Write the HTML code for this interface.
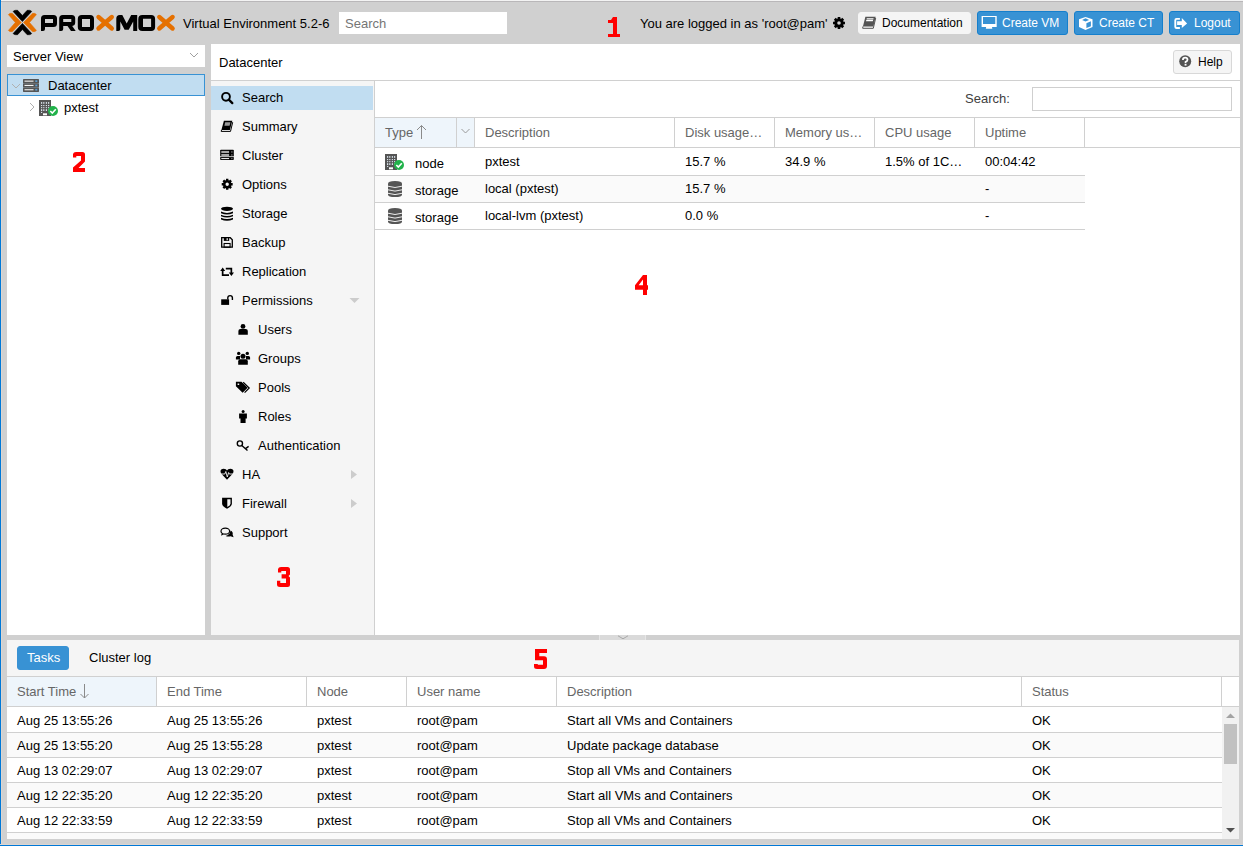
<!DOCTYPE html>
<html><head><meta charset="utf-8">
<style>
*{box-sizing:border-box;margin:0;padding:0}
html,body{width:1243px;height:846px;overflow:hidden}
body{position:relative;background:#d0d0d0;font-family:"Liberation Sans",sans-serif;font-size:13px;color:#000}
.a{position:absolute;display:block}
.t{position:absolute;white-space:nowrap;line-height:15px}
.btnb{position:absolute;background:#3892d4;border:1px solid #157fcc;border-radius:3px}
.btng{position:absolute;background:#f5f5f5;border:1px solid #f5f5f5;border-radius:3px}
.red{position:absolute;color:#f00;font-weight:bold;font-size:27px;line-height:20px}
</style></head><body>

<div class="a" style="left:0px;top:0px;width:1243px;height:1px;background:#f3f3f3;"></div>
<div class="a" style="left:0px;top:1px;width:1243px;height:1px;background:#b9b7b9;"></div>
<div class="a" style="left:0px;top:0px;width:1px;height:846px;background:#0078d7;"></div>
<div class="a" style="left:1px;top:2px;width:1px;height:843px;background:#dcd6d2;"></div>
<div class="a" style="left:0px;top:844px;width:1243px;height:1px;background:#dcd6d2;"></div>
<div class="a" style="left:0px;top:845px;width:1243px;height:1px;background:#0078d7;"></div>
<svg class="a" style="left:0px;top:0px;" width="180" height="40" viewBox="0 0 180 40">
<path fill="#e57000" stroke="#e57000" stroke-width="0.6" stroke-linejoin="round" d="M8.4,14.6 Q9.8,12.9 12.4,13.4 L21.3,22.5 L12.4,31.6 Q9.8,32.1 8.4,30.4 L15.3,22.5 Z"/>
<path fill="#e57000" stroke="#e57000" stroke-width="0.6" stroke-linejoin="round" d="M36.4,14.6 Q35,12.9 32.4,13.4 L23.5,22.5 L32.4,31.6 Q35,32.1 36.4,30.4 L29.5,22.5 Z"/>
<path fill="#000" stroke="#000" stroke-width="0.6" stroke-linejoin="round" d="M13.1,11.4 Q14.6,9.8 17.6,10.3 L22.4,15.5 L27.2,10.3 Q30.2,9.8 31.7,11.4 L22.4,21.6 Z"/>
<path fill="#000" stroke="#000" stroke-width="0.6" stroke-linejoin="round" d="M13.1,33.6 Q14.6,35.2 17.6,34.7 L22.4,29.5 L27.2,34.7 Q30.2,35.2 31.7,33.6 L22.4,23.4 Z"/>
<path fill="#000" fill-rule="evenodd" d="M41,31 L41,18.5 Q41,15 44.5,15 L53.5,15 Q57,15 57,18.5 L57,23.5 Q57,27 53.5,27 L45,27 L45,29 Q45,31 43,31 Z M45,19 L53,19 L53,23 L45,23 Z"/>
<path fill="#000" fill-rule="evenodd" d="M59.2,31 L59.2,18.5 Q59.2,15 62.7,15 L71.7,15 Q75.2,15 75.2,18.5 L75.2,22.5 Q75.2,25.5 72.2,26 L75.7,31 L71,31 L67.5,26 L63.2,26 L63.2,29 Q63.2,31 61.2,31 Z M63.2,19 L71.3,19 L71.3,22 L63.2,22 Z"/>
<path fill="#000" fill-rule="evenodd" d="M81.8,15 L90,15 Q94,15 94,19 L94,27 Q94,31 90,31 L81.8,31 Q77.8,31 77.8,27 L77.8,19 Q77.8,15 81.8,15 Z M82,19 L90,19 L90,27 L82,27 Z"/>
<path fill="none" stroke="#e57000" stroke-width="4.4" stroke-linecap="round" d="M98.5,17 L111.8,28.5 M111.8,17 L98.5,28.5"/>
<path fill="#000" d="M116.3,31 L116.3,18.5 Q116.3,15 119.8,15 L122.3,15 L126.7,23.5 L131.2,15 L137.2,15 L137.2,31 L133.2,31 L133.2,21.5 L128.7,29.7 L124.6,29.7 L120.3,21.5 L120.3,29 Q120.3,31 118.3,31 Z"/>
<path fill="#000" fill-rule="evenodd" d="M142.3,15 L151.1,15 Q155.1,15 155.1,19 L155.1,27 Q155.1,31 151.1,31 L142.3,31 Q138.3,31 138.3,27 L138.3,19 Q138.3,15 142.3,15 Z M143,18.8 L151.1,18.8 L151.1,27 L143,27 Z"/>
<path fill="none" stroke="#e57000" stroke-width="4.4" stroke-linecap="round" d="M159.3,17 L172.6,28.5 M172.6,17 L159.3,28.5"/>
</svg>
<div class="t" style="left:183px;top:16px;font-size:13px;">Virtual Environment 5.2-6</div>
<div class="a" style="left:339px;top:12px;width:168px;height:22px;background:#fff;"></div>
<div class="t" style="left:345px;top:16px;font-size:13px;color:#757575;">Search</div>
<div class="t" style="left:640px;top:16px;font-size:13px;">You are logged in as 'root@pam'</div>
<svg class="a" style="left:830px;top:14px;" width="18" height="18" viewBox="0 0 18 18"><path fill="#000" fill-rule="evenodd" d="M13.34,7.20 L13.51,7.68 L14.96,7.69 L14.96,10.31 L13.51,10.32 L13.34,10.80 L13.13,11.25 L14.14,12.29 L12.29,14.14 L11.25,13.13 L10.80,13.34 L10.32,13.51 L10.31,14.96 L7.69,14.96 L7.68,13.51 L7.20,13.34 L6.75,13.13 L5.71,14.14 L3.86,12.29 L4.87,11.25 L4.66,10.80 L4.49,10.32 L3.04,10.31 L3.04,7.69 L4.49,7.68 L4.66,7.20 L4.87,6.75 L3.86,5.71 L5.71,3.86 L6.75,4.87 L7.20,4.66 L7.68,4.49 L7.69,3.04 L10.31,3.04 L10.32,4.49 L10.80,4.66 L11.25,4.87 L12.29,3.86 L14.14,5.71 L13.13,6.75 Z M10.80,9.00 A1.8,1.8 0 1,0 7.20,9.00 A1.8,1.8 0 1,0 10.80,9.00 Z"/></svg>
<div class="btng" style="left:858px;top:12px;width:113px;height:22px"></div>
<svg class="a" style="left:861px;top:13px;" width="20" height="20" viewBox="0 0 20 20"><path fill="#555" d="M4.4,3.8 L14.7,3.8 L12.4,13.5 L1.9,13.5 Z"/><path fill="#fff" d="M5.8,5.3 L12.6,5.3 L12.3,6.4 L5.5,6.4 Z M5.3,7.1 L12.1,7.1 L11.8,8.2 L5,8.2 Z"/><path fill="none" stroke="#555" stroke-width="1" d="M1.9,13.5 L1.7,15.3 L12.3,15.3 L14.7,5"/></svg>
<div class="t" style="left:882px;top:16px;font-size:12px;">Documentation</div>
<div class="btnb" style="left:977px;top:11px;width:91px;height:24px"></div>
<svg class="a" style="left:979px;top:13px;" width="20" height="20" viewBox="0 0 20 20"><path fill="#fff" fill-rule="evenodd" d="M2.6,3 L17.7,3 L17.7,14 L2.6,14 Z M4,4.1 L16.3,4.1 L16.3,10.9 L4,10.9 Z"/><path fill="#fff" d="M7.1,14 L13,14 L13.3,15.8 L6.8,15.8 Z"/></svg>
<div class="t" style="left:1002px;top:16px;font-size:12px;color:#fff;">Create VM</div>
<div class="btnb" style="left:1074px;top:11px;width:89px;height:24px"></div>
<svg class="a" style="left:1076px;top:13px;" width="20" height="20" viewBox="0 0 20 20"><path fill="#fff" fill-rule="evenodd" d="M9.5,4.1 L16.5,6.3 L16.5,14 L9.5,16.9 L3,14 L3,6.3 Z M6.1,7 L9.5,5.3 L13.1,7 L9.5,8.5 Z M10.4,10.3 L14.9,8.3 L14.9,13.3 L10.4,15.1 Z"/></svg>
<div class="t" style="left:1099px;top:16px;font-size:12px;color:#fff;">Create CT</div>
<div class="btnb" style="left:1169px;top:11px;width:71px;height:24px"></div>
<svg class="a" style="left:1171px;top:13px;" width="20" height="20" viewBox="0 0 20 20"><path fill="none" stroke="#fff" stroke-width="1.9" d="M8.9,5.9 L5.6,5.9 Q4.3,5.9 4.3,7.2 L4.3,13.7 Q4.3,15 5.6,15 L8.9,15"/><path fill="#fff" d="M6.1,8.2 L10.8,8.2 L10.8,5 L16.1,10.5 L10.8,15 L10.8,12.1 L6.1,12.1 Z"/></svg>
<div class="t" style="left:1194px;top:16px;font-size:12px;color:#fff;">Logout</div>
<div class="a" style="left:7px;top:45px;width:198px;height:22px;background:#fff;"></div>
<div class="t" style="left:13px;top:49px;font-size:13px;">Server View</div>
<svg class="a" style="left:189px;top:52px;" width="10" height="7" viewBox="0 0 10 7"><path fill="none" stroke="#a0a0a0" stroke-width="1" d="M1,1 L5,5 L9,1"/></svg>
<div class="a" style="left:7px;top:74px;width:198px;height:561px;background:#fff;"></div>
<div class="a" style="left:7px;top:74px;width:198px;height:22px;background:#c1ddf1;border:1px solid #3892d4"></div>
<svg class="a" style="left:11px;top:83px;" width="11" height="7" viewBox="0 0 11 7"><path fill="none" stroke="#b0b0b0" stroke-width="1" d="M1,1 L5,5 L9,1"/></svg>
<svg class="a" style="left:23px;top:0px;" width="17" height="100" viewBox="0 0 17 100"><rect x="0" y="79" width="16" height="4.3" rx="0.6" fill="#555"/><rect x="1.5" y="80.6" width="9" height="1.1" fill="#f4f4f4"/><rect x="12.3" y="80.3" width="2" height="1.7" fill="#5a9fd6"/><rect x="0" y="83.3" width="16" height="4.3" rx="0.6" fill="#555"/><rect x="1.5" y="84.89999999999999" width="9" height="1.1" fill="#f4f4f4"/><rect x="12.3" y="84.6" width="2" height="1.7" fill="#5a9fd6"/><rect x="0" y="87.6" width="16" height="4.3" rx="0.6" fill="#555"/><rect x="1.5" y="89.19999999999999" width="9" height="1.1" fill="#f4f4f4"/><rect x="12.3" y="88.89999999999999" width="2" height="1.7" fill="#5a9fd6"/></svg>
<div class="t" style="left:48px;top:78px;font-size:13px;">Datacenter</div>
<svg class="a" style="left:29px;top:102px;" width="7" height="11" viewBox="0 0 7 11"><path fill="none" stroke="#b0b0b0" stroke-width="1" d="M1,1 L5,5 L1,9"/></svg>
<svg class="a" style="left:39px;top:100px;" width="20" height="17" viewBox="0 0 20 17"><rect x="0" y="0" width="12" height="16" fill="#555"/><rect x="2" y="2.1" width="1.2" height="1.7" fill="#d8e2ea"/><rect x="4.2" y="2.1" width="1.2" height="1.7" fill="#d8e2ea"/><rect x="6.8" y="2.1" width="1.2" height="1.7" fill="#d8e2ea"/><rect x="9" y="2.1" width="1.2" height="1.7" fill="#d8e2ea"/><rect x="2" y="5" width="1.2" height="1.1" fill="#d8e2ea"/><rect x="4.2" y="5" width="1.2" height="1.1" fill="#d8e2ea"/><rect x="6.8" y="5" width="1.2" height="1.1" fill="#d8e2ea"/><rect x="9" y="5" width="1.2" height="1.1" fill="#d8e2ea"/><rect x="2" y="7.1" width="1.2" height="1.1" fill="#d8e2ea"/><rect x="4.2" y="7.1" width="1.2" height="1.1" fill="#d8e2ea"/><rect x="6.8" y="7.1" width="1.2" height="1.1" fill="#d8e2ea"/><rect x="9" y="7.1" width="1.2" height="1.1" fill="#d8e2ea"/><rect x="2" y="9.2" width="1.2" height="1.8" fill="#d8e2ea"/><rect x="4.2" y="9.2" width="1.2" height="1.8" fill="#d8e2ea"/><rect x="6.8" y="9.2" width="1.2" height="1.8" fill="#d8e2ea"/><rect x="9" y="9.2" width="1.2" height="1.8" fill="#d8e2ea"/><rect x="2" y="11.9" width="1.2" height="1.1" fill="#d8e2ea"/><rect x="4" y="13.3" width="4" height="2" fill="#fff"/><circle cx="14" cy="11" r="5" fill="#21b24a"/><path fill="none" stroke="#fff" stroke-width="1.6" d="M11.3,11 L13.3,13 L16.8,9.3"/></svg>
<div class="t" style="left:64px;top:100px;font-size:13px;">pxtest</div>
<div class="a" style="left:211px;top:44px;width:1029px;height:591px;background:#fff;"></div>
<div class="t" style="left:219px;top:55px;font-size:13px;">Datacenter</div>
<div class="btng" style="left:1173px;top:50px;width:59px;height:24px;border-color:#d8d8d8"></div>
<svg class="a" style="left:1179px;top:55px;" width="13" height="13" viewBox="0 0 13 13"><circle cx="6.2" cy="6.2" r="6" fill="#555"/><path fill="none" stroke="#fff" stroke-width="1.8" d="M3.9,4.9 Q3.9,2.7 6.2,2.7 Q8.5,2.7 8.5,4.8 Q8.5,6.2 6.6,6.8 L6.6,8"/><rect x="5.6" y="8.8" width="1.9" height="1.8" fill="#fff"/></svg>
<div class="t" style="left:1198px;top:55px;font-size:12px;">Help</div>
<div class="a" style="left:211px;top:80px;width:1029px;height:1px;background:#d0d0d0;"></div>
<div class="a" style="left:211px;top:81px;width:163px;height:554px;background:#f5f5f5;"></div>
<div class="a" style="left:374px;top:81px;width:1px;height:554px;background:#d0d0d0;"></div>
<div class="a" style="left:211px;top:86px;width:162px;height:24px;background:#c1ddf1;"></div>
<div class="t" style="left:242px;top:90px;font-size:13px;">Search</div>
<div class="t" style="left:242px;top:119px;font-size:13px;">Summary</div>
<div class="t" style="left:242px;top:148px;font-size:13px;">Cluster</div>
<div class="t" style="left:242px;top:177px;font-size:13px;">Options</div>
<div class="t" style="left:242px;top:206px;font-size:13px;">Storage</div>
<div class="t" style="left:242px;top:235px;font-size:13px;">Backup</div>
<div class="t" style="left:242px;top:264px;font-size:13px;">Replication</div>
<div class="t" style="left:242px;top:293px;font-size:13px;">Permissions</div>
<div class="t" style="left:258px;top:322px;font-size:13px;">Users</div>
<div class="t" style="left:258px;top:351px;font-size:13px;">Groups</div>
<div class="t" style="left:258px;top:380px;font-size:13px;">Pools</div>
<div class="t" style="left:258px;top:409px;font-size:13px;">Roles</div>
<div class="t" style="left:258px;top:438px;font-size:13px;">Authentication</div>
<div class="t" style="left:242px;top:467px;font-size:13px;">HA</div>
<div class="t" style="left:242px;top:496px;font-size:13px;">Firewall</div>
<div class="t" style="left:242px;top:525px;font-size:13px;">Support</div>
<div id="navicons"></div>
<svg class="a" style="left:349px;top:297px;" width="11" height="7" viewBox="0 0 11 7"><path fill="#cccccc" d="M0.5,1 L10.5,1 L5.5,6 Z"/></svg>
<svg class="a" style="left:350px;top:469px;" width="8" height="11" viewBox="0 0 8 11"><path fill="#cccccc" d="M1,1 L7,5.5 L1,10 Z"/></svg>
<svg class="a" style="left:350px;top:498px;" width="8" height="11" viewBox="0 0 8 11"><path fill="#cccccc" d="M1,1 L7,5.5 L1,10 Z"/></svg>
<div class="t" style="left:965px;top:91px;font-size:13px;color:#404040;">Search:</div>
<div class="a" style="left:1032px;top:87px;width:200px;height:24px;background:#fff;border:1px solid #cfcfcf"></div>
<div class="a" style="left:375px;top:117px;width:865px;height:1px;background:#d0d0d0;"></div>
<div class="a" style="left:375px;top:118px;width:100px;height:29px;background:#eef5fb;"></div>
<div class="a" style="left:375px;top:147px;width:865px;height:1px;background:#d0d0d0;"></div>
<div class="a" style="left:474px;top:118px;width:1px;height:29px;background:#d0d0d0;"></div>
<div class="a" style="left:674px;top:118px;width:1px;height:29px;background:#d0d0d0;"></div>
<div class="a" style="left:774px;top:118px;width:1px;height:29px;background:#d0d0d0;"></div>
<div class="a" style="left:874px;top:118px;width:1px;height:29px;background:#d0d0d0;"></div>
<div class="a" style="left:974px;top:118px;width:1px;height:29px;background:#d0d0d0;"></div>
<div class="a" style="left:1084px;top:118px;width:1px;height:29px;background:#d0d0d0;"></div>
<div class="a" style="left:456px;top:118px;width:1px;height:29px;background:#d0d0d0;"></div>
<svg class="a" style="left:460px;top:128px;" width="11" height="7" viewBox="0 0 11 7"><path fill="none" stroke="#9a9a9a" stroke-width="1" d="M1.5,1 L5.5,5 L9.5,1"/></svg>
<div class="t" style="left:385px;top:125px;font-size:13px;color:#666;">Type</div>
<div class="t" style="left:485px;top:125px;font-size:13px;color:#666;">Description</div>
<div class="t" style="left:685px;top:125px;font-size:13px;color:#666;">Disk usage…</div>
<div class="t" style="left:785px;top:125px;font-size:13px;color:#666;">Memory us…</div>
<div class="t" style="left:885px;top:125px;font-size:13px;color:#666;">CPU usage</div>
<div class="t" style="left:985px;top:125px;font-size:13px;color:#666;">Uptime</div>
<svg class="a" style="left:415px;top:124px;" width="12" height="16" viewBox="0 0 12 16"><path fill="none" stroke="#8a8a8a" stroke-width="1" d="M6.5,1.5 L6.5,15 M2,6 L6.5,1.5 L11,6"/></svg>
<div class="a" style="left:375px;top:175px;width:710px;height:1px;background:#d0d0d0;"></div>
<div class="t" style="left:415px;top:156px;font-size:13px;">node</div>
<div class="t" style="left:485px;top:154px;font-size:13px;">pxtest</div>
<div class="t" style="left:685px;top:154px;font-size:13px;">15.7 %</div>
<div class="t" style="left:785px;top:154px;font-size:13px;">34.9 %</div>
<div class="t" style="left:885px;top:154px;font-size:13px;">1.5% of 1C…</div>
<div class="t" style="left:985px;top:154px;font-size:13px;">00:04:42</div>
<div class="a" style="left:375px;top:176px;width:710px;height:26px;background:#fafafa;"></div>
<div class="a" style="left:375px;top:202px;width:710px;height:1px;background:#d0d0d0;"></div>
<div class="t" style="left:415px;top:183px;font-size:13px;">storage</div>
<div class="t" style="left:485px;top:181px;font-size:13px;">local (pxtest)</div>
<div class="t" style="left:685px;top:181px;font-size:13px;">15.7 %</div>
<div class="t" style="left:785px;top:181px;font-size:13px;"></div>
<div class="t" style="left:885px;top:181px;font-size:13px;"></div>
<div class="t" style="left:985px;top:181px;font-size:13px;">-</div>
<div class="a" style="left:375px;top:229px;width:710px;height:1px;background:#d0d0d0;"></div>
<div class="t" style="left:415px;top:210px;font-size:13px;">storage</div>
<div class="t" style="left:485px;top:208px;font-size:13px;">local-lvm (pxtest)</div>
<div class="t" style="left:685px;top:208px;font-size:13px;">0.0 %</div>
<div class="t" style="left:785px;top:208px;font-size:13px;"></div>
<div class="t" style="left:885px;top:208px;font-size:13px;"></div>
<div class="t" style="left:985px;top:208px;font-size:13px;">-</div>
<svg class="a" style="left:385px;top:154px;" width="20" height="17" viewBox="0 0 20 17"><rect x="0" y="0" width="12" height="16" fill="#555"/><rect x="2" y="2.1" width="1.2" height="1.7" fill="#d8e2ea"/><rect x="4.2" y="2.1" width="1.2" height="1.7" fill="#d8e2ea"/><rect x="6.8" y="2.1" width="1.2" height="1.7" fill="#d8e2ea"/><rect x="9" y="2.1" width="1.2" height="1.7" fill="#d8e2ea"/><rect x="2" y="5" width="1.2" height="1.1" fill="#d8e2ea"/><rect x="4.2" y="5" width="1.2" height="1.1" fill="#d8e2ea"/><rect x="6.8" y="5" width="1.2" height="1.1" fill="#d8e2ea"/><rect x="9" y="5" width="1.2" height="1.1" fill="#d8e2ea"/><rect x="2" y="7.1" width="1.2" height="1.1" fill="#d8e2ea"/><rect x="4.2" y="7.1" width="1.2" height="1.1" fill="#d8e2ea"/><rect x="6.8" y="7.1" width="1.2" height="1.1" fill="#d8e2ea"/><rect x="9" y="7.1" width="1.2" height="1.1" fill="#d8e2ea"/><rect x="2" y="9.2" width="1.2" height="1.8" fill="#d8e2ea"/><rect x="4.2" y="9.2" width="1.2" height="1.8" fill="#d8e2ea"/><rect x="6.8" y="9.2" width="1.2" height="1.8" fill="#d8e2ea"/><rect x="9" y="9.2" width="1.2" height="1.8" fill="#d8e2ea"/><rect x="2" y="11.9" width="1.2" height="1.1" fill="#d8e2ea"/><rect x="4" y="13.3" width="4" height="2" fill="#fff"/><circle cx="14" cy="11" r="5" fill="#21b24a"/><path fill="none" stroke="#fff" stroke-width="1.6" d="M11.3,11 L13.3,13 L16.8,9.3"/></svg>
<svg class="a" style="left:388px;top:181px;" width="14" height="17" viewBox="0 0 14 17"><path fill="#555" d="M0,2.6 Q0,0 7,0 Q14,0 14,2.6 L14,13.4 Q14,16 7,16 Q0,16 0,13.4 Z"/><path fill="none" stroke="#fafafa" stroke-width="0.9" d="M0,5.2 Q7,7.800000000000001 14,5.2"/><path fill="none" stroke="#fafafa" stroke-width="0.9" d="M0,8.8 Q7,11.4 14,8.8"/><path fill="none" stroke="#fafafa" stroke-width="0.9" d="M0,12.3 Q7,14.9 14,12.3"/></svg>
<svg class="a" style="left:388px;top:208px;" width="14" height="17" viewBox="0 0 14 17"><path fill="#555" d="M0,2.6 Q0,0 7,0 Q14,0 14,2.6 L14,13.4 Q14,16 7,16 Q0,16 0,13.4 Z"/><path fill="none" stroke="#fff" stroke-width="0.9" d="M0,5.2 Q7,7.800000000000001 14,5.2"/><path fill="none" stroke="#fff" stroke-width="0.9" d="M0,8.8 Q7,11.4 14,8.8"/><path fill="none" stroke="#fff" stroke-width="0.9" d="M0,12.3 Q7,14.9 14,12.3"/></svg>
<div class="a" style="left:599px;top:635px;width:47px;height:5px;background:#e6e6e6;"></div>
<div class="a" style="left:600px;top:635px;width:45px;height:5px;background:#dadada;"></div>
<svg class="a" style="left:615px;top:635px;" width="16" height="5" viewBox="0 0 16 5"><path fill="none" stroke="#a8a8a8" stroke-width="1" d="M3,0.8 L8,3.8 L13,0.8"/></svg>
<div class="a" style="left:7px;top:640px;width:1232px;height:199px;background:#fff;"></div>
<div class="a" style="left:7px;top:640px;width:1232px;height:36px;background:#f5f5f5;"></div>
<div class="btnb" style="left:17px;top:646px;width:52px;height:24px;border-color:#3892d4"></div>
<div class="t" style="left:27px;top:650px;font-size:13px;color:#fff;">Tasks</div>
<div class="t" style="left:89px;top:650px;font-size:13px;">Cluster log</div>
<div class="a" style="left:7px;top:676px;width:1232px;height:1px;background:#d0d0d0;"></div>
<div class="a" style="left:7px;top:677px;width:150px;height:29px;background:#eef5fb;"></div>
<div class="a" style="left:7px;top:706px;width:1232px;height:1px;background:#d0d0d0;"></div>
<div class="a" style="left:156px;top:677px;width:1px;height:29px;background:#d0d0d0;"></div>
<div class="t" style="left:17px;top:684px;font-size:13px;color:#666;">Start Time</div>
<div class="a" style="left:306px;top:677px;width:1px;height:29px;background:#d0d0d0;"></div>
<div class="t" style="left:167px;top:684px;font-size:13px;color:#666;">End Time</div>
<div class="a" style="left:406px;top:677px;width:1px;height:29px;background:#d0d0d0;"></div>
<div class="t" style="left:317px;top:684px;font-size:13px;color:#666;">Node</div>
<div class="a" style="left:556px;top:677px;width:1px;height:29px;background:#d0d0d0;"></div>
<div class="t" style="left:417px;top:684px;font-size:13px;color:#666;">User name</div>
<div class="a" style="left:1021px;top:677px;width:1px;height:29px;background:#d0d0d0;"></div>
<div class="t" style="left:567px;top:684px;font-size:13px;color:#666;">Description</div>
<div class="a" style="left:1221px;top:677px;width:1px;height:29px;background:#d0d0d0;"></div>
<div class="t" style="left:1032px;top:684px;font-size:13px;color:#666;">Status</div>
<svg class="a" style="left:78px;top:683px;" width="12" height="16" viewBox="0 0 12 16"><path fill="none" stroke="#8a8a8a" stroke-width="1" d="M6.5,1 L6.5,15 M2.5,11 L6.5,15 L10.5,11"/></svg>
<div class="a" style="left:7px;top:732px;width:1215px;height:1px;background:#d0d0d0;"></div>
<div class="t" style="left:17px;top:713px;font-size:13px;">Aug 25 13:55:26</div>
<div class="t" style="left:167px;top:713px;font-size:13px;">Aug 25 13:55:26</div>
<div class="t" style="left:317px;top:713px;font-size:13px;">pxtest</div>
<div class="t" style="left:417px;top:713px;font-size:13px;">root@pam</div>
<div class="t" style="left:567px;top:713px;font-size:13px;">Start all VMs and Containers</div>
<div class="t" style="left:1032px;top:713px;font-size:13px;">OK</div>
<div class="a" style="left:7px;top:733px;width:1215px;height:24px;background:#fafafa;"></div>
<div class="a" style="left:7px;top:757px;width:1215px;height:1px;background:#d0d0d0;"></div>
<div class="t" style="left:17px;top:738px;font-size:13px;">Aug 25 13:55:20</div>
<div class="t" style="left:167px;top:738px;font-size:13px;">Aug 25 13:55:28</div>
<div class="t" style="left:317px;top:738px;font-size:13px;">pxtest</div>
<div class="t" style="left:417px;top:738px;font-size:13px;">root@pam</div>
<div class="t" style="left:567px;top:738px;font-size:13px;">Update package database</div>
<div class="t" style="left:1032px;top:738px;font-size:13px;">OK</div>
<div class="a" style="left:7px;top:782px;width:1215px;height:1px;background:#d0d0d0;"></div>
<div class="t" style="left:17px;top:763px;font-size:13px;">Aug 13 02:29:07</div>
<div class="t" style="left:167px;top:763px;font-size:13px;">Aug 13 02:29:07</div>
<div class="t" style="left:317px;top:763px;font-size:13px;">pxtest</div>
<div class="t" style="left:417px;top:763px;font-size:13px;">root@pam</div>
<div class="t" style="left:567px;top:763px;font-size:13px;">Stop all VMs and Containers</div>
<div class="t" style="left:1032px;top:763px;font-size:13px;">OK</div>
<div class="a" style="left:7px;top:783px;width:1215px;height:24px;background:#fafafa;"></div>
<div class="a" style="left:7px;top:807px;width:1215px;height:1px;background:#d0d0d0;"></div>
<div class="t" style="left:17px;top:788px;font-size:13px;">Aug 12 22:35:20</div>
<div class="t" style="left:167px;top:788px;font-size:13px;">Aug 12 22:35:20</div>
<div class="t" style="left:317px;top:788px;font-size:13px;">pxtest</div>
<div class="t" style="left:417px;top:788px;font-size:13px;">root@pam</div>
<div class="t" style="left:567px;top:788px;font-size:13px;">Start all VMs and Containers</div>
<div class="t" style="left:1032px;top:788px;font-size:13px;">OK</div>
<div class="a" style="left:7px;top:832px;width:1215px;height:1px;background:#d0d0d0;"></div>
<div class="t" style="left:17px;top:813px;font-size:13px;">Aug 12 22:33:59</div>
<div class="t" style="left:167px;top:813px;font-size:13px;">Aug 12 22:33:59</div>
<div class="t" style="left:317px;top:813px;font-size:13px;">pxtest</div>
<div class="t" style="left:417px;top:813px;font-size:13px;">root@pam</div>
<div class="t" style="left:567px;top:813px;font-size:13px;">Stop all VMs and Containers</div>
<div class="t" style="left:1032px;top:813px;font-size:13px;">OK</div>
<div class="a" style="left:7px;top:833px;width:1215px;height:6px;background:#fafafa;"></div>
<div class="a" style="left:1222px;top:707px;width:17px;height:132px;background:#f1f1f1;"></div>
<div class="a" style="left:1224px;top:724px;width:13px;height:40px;background:#c1c1c1;"></div>
<svg class="a" style="left:1225px;top:712px;" width="11" height="7" viewBox="0 0 11 7"><path fill="#a3a3a3" d="M1,6 L5.5,1.5 L10,6 Z"/></svg>
<svg class="a" style="left:1225px;top:827px;" width="11" height="7" viewBox="0 0 11 7"><path fill="#505050" d="M1,1 L10,1 L5.5,5.5 Z"/></svg>
<svg class="a" style="left:0;top:0" width="1243" height="846" viewBox="0 0 1243 846"><circle cx="226" cy="96.8" r="3.9" fill="none" stroke="#000" stroke-width="1.9"/><path d="M228.8,99.6 L232.3,103.1" stroke="#000" stroke-width="2.3" stroke-linecap="round"/><path d="M223.9,120.8 L232.3,120.8 L229.9,130 L221.4,130 Z" fill="#000"/><path d="M225.2,122.2 L230.4,122.2 L229.6,125.8 L224.4,125.8 Z" fill="#9a9a9a"/><path d="M221.5,130 L221.2,131.4 L230.5,131.4 L232.7,122.2" fill="none" stroke="#000" stroke-width="1"/><rect x="220.2" y="149.8" width="13.6" height="10.3" rx="0.8" fill="#000"/><rect x="220" y="156.3" width="14" height="0.8" fill="#f5f5f5"/><rect x="221.3" y="150.9" width="7.8" height="2.1" fill="#a8a8a8"/><rect x="221.3" y="153.9" width="7.8" height="2.1" fill="#a8a8a8"/><rect x="221.3" y="158.1" width="7.8" height="1.0" fill="#fff"/><rect x="231.2" y="151.2" width="1.3" height="1.5" fill="#777"/><rect x="231.2" y="154.2" width="1.3" height="1.5" fill="#777"/><rect x="231.2" y="158" width="1.3" height="1.2" fill="#777"/><path fill="#000" fill-rule="evenodd" d="M231.17,182.65 L231.33,183.09 L232.67,183.10 L232.67,185.50 L231.33,185.51 L231.17,185.95 L230.97,186.36 L231.92,187.32 L230.22,189.02 L229.26,188.07 L228.85,188.27 L228.41,188.43 L228.40,189.77 L226.00,189.77 L225.99,188.43 L225.55,188.27 L225.14,188.07 L224.18,189.02 L222.48,187.32 L223.43,186.36 L223.23,185.95 L223.07,185.51 L221.73,185.50 L221.73,183.10 L223.07,183.09 L223.23,182.65 L223.43,182.24 L222.48,181.28 L224.18,179.58 L225.14,180.53 L225.55,180.33 L225.99,180.17 L226.00,178.83 L228.40,178.83 L228.41,180.17 L228.85,180.33 L229.26,180.53 L230.22,179.58 L231.92,181.28 L230.97,182.24 Z M228.90,184.30 A1.7,1.7 0 1,0 225.50,184.30 A1.7,1.7 0 1,0 228.90,184.30 Z"/><ellipse cx="227" cy="208.8" rx="6" ry="2.1" fill="#000"/><path d="M221,211.6 Q227,214.2 233,211.6 L233,213.2 Q227,215.79999999999998 221,213.2 Z" fill="#000"/><path d="M221,214.7 Q227,217.29999999999998 233,214.7 L233,216.29999999999998 Q227,218.89999999999998 221,216.29999999999998 Z" fill="#000"/><path d="M221,217.8 Q227,220.4 233,217.8 L233,219.4 Q227,222.0 221,219.4 Z" fill="#000"/><path d="M221.7,237.7 L230.3,237.7 L232.3,239.7 L232.3,247.2 L221.7,247.2 Z" fill="none" stroke="#000" stroke-width="1.3"/><rect x="223.8" y="237.5" width="5.4" height="3.4" fill="#000"/><rect x="226.6" y="238.2" width="1.2" height="2" fill="#f5f5f5"/><rect x="224.1" y="243.5" width="6" height="3.7" fill="none" stroke="#000" stroke-width="1.1"/><path d="M220.2,271 L222.7,267.6 L225.2,271 L223.5,271 L223.5,274.2 L229,274.2 L229,275.9 L221.8,275.9 L221.8,271 Z" fill="#000"/><path d="M225.8,267.8 L232.2,267.8 L232.2,272.4 L234,272.4 L231.4,275.9 L228.8,272.4 L230.5,272.4 L230.5,269.5 L225.8,269.5 Z" fill="#000"/><rect x="221.2" y="299.3" width="7.9" height="5.6" fill="#000"/><path d="M227.8,299.5 L227.8,297.8 Q227.8,295.6 230.1,295.6 Q232.4,295.6 232.4,297.8 L232.4,299.9" fill="none" stroke="#000" stroke-width="1.4"/><circle cx="243" cy="326.4" r="2.4" fill="#000"/><path d="M238.4,334.8 L238.4,331 Q238.4,328.9 240.5,328.9 L245.7,328.9 Q247.8,328.9 247.8,331 L247.8,334.8 Z" fill="#000"/><circle cx="243" cy="356.3" r="2.5" fill="#000"/><circle cx="238.7" cy="353.4" r="1.7" fill="#000"/><circle cx="247.3" cy="353.4" r="1.7" fill="#000"/><path d="M235.9,359.5 L235.9,357.6 Q235.9,356 237.5,356 L240,356 L240,359.5 Z M246,356 L248.5,356 Q250.1,356 250.1,357.6 L250.1,359.5 L246,359.5 Z" fill="#000"/><path d="M238.2,364.8 L238.2,361.3 Q238.2,359.3 240.2,359.3 L245.8,359.3 Q247.8,359.3 247.8,361.3 L247.8,364.8 Z" fill="#000"/><path fill="#000" fill-rule="evenodd" d="M235.9,381.8 L241.5,381.8 L247.6,387.8 L242.6,392.8 L235.9,386.3 Z M237.6,383.4 L239.2,383.4 L239.2,385 L237.6,385 Z"/><path d="M243.2,382.2 L249.2,388 L244.6,392.6" fill="none" stroke="#000" stroke-width="1.2"/><circle cx="243.1" cy="411.5" r="1.5" fill="#000"/><path d="M239.1,413.6 L246.9,413.6 L246.9,418.6 L245.6,418.6 L245.6,423 L240.5,423 L240.5,418.6 L239.1,418.6 Z" fill="#000"/><circle cx="239.9" cy="443.5" r="2.6" fill="none" stroke="#000" stroke-width="1.4"/><path d="M241.8,445.5 L247.5,450.6 M245.6,448.6 L248.6,446.4" fill="none" stroke="#000" stroke-width="1.4"/><path fill="#000" d="M220.5,471.3 Q220.5,468.7 223.7,468.7 Q226.3,468.7 227,470.6 Q227.7,468.7 230.3,468.7 Q233.5,468.7 233.5,471.3 Q233.5,473 232,474.5 L227,479.8 L222,474.5 Q220.5,473 220.5,471.3 Z"/><path d="M221,474 L224.8,474 L225.8,471.5 L227.3,477 L228.6,472.5 L229.3,474 L233,474" fill="none" stroke="#f5f5f5" stroke-width="0.9"/><path d="M222.1,497.7 L231.9,497.7 L231.9,503.6 Q231.9,506.6 227,508.8 Q222.1,506.6 222.1,503.6 Z" fill="#000"/><path d="M227.3,499.2 L230.5,499.2 L230.5,503.5 Q230.5,505.6 227.3,507.1 Z" fill="#f5f5f5"/><ellipse cx="225.3" cy="531.2" rx="4.3" ry="3" fill="none" stroke="#000" stroke-width="1.2"/><path d="M221.6,533.4 L221.2,535.8 L223.8,534.2" fill="#000"/><path d="M230.6,530.5 Q233.4,532 232.6,534.6 L233.6,537.2 L230.5,536.2 Q228,536.9 225.6,535.9 Q229.8,535 230.6,530.5 Z" fill="#000"/></svg>
<svg class="a" style="left:0;top:0" width="1243" height="846" viewBox="0 0 1243 846"><path fill="#f00" fill-rule="evenodd" d="M613,17 L617,17 L617,34 L620,34 L620,37 L608,37 L608,34 L613,34 L613,23 L608,23 L608,20 L611,20 Z"/><path fill="#f00" fill-rule="evenodd" d="M73,154 Q73.5,152 76,152 L82.5,152 Q85,152 85,154.5 L85,161.5 L78.5,168 L85,168 L85,172 L73,172 L73,167.5 L81,160.5 L81,156 L76.3,156 L76.3,157.5 L73,157.5 Z"/><path fill="#f00" fill-rule="evenodd" d="M278,569 Q278.5,567 281,567 L287.5,567 Q290,567 290,569.5 L290,574.5 L288.5,576 L290,577.5 L290,584.5 Q290,587 287.5,587 L280,587 Q277,587 277,584.5 L277,580.7 L280.3,580.7 L280.3,583 L286,583 L286,578.6 L281.6,578.6 L281.6,574.3 L286,574.3 L286,571 L281.3,571 L281.3,572.4 L278,572.4 Z"/><path fill="#f00" fill-rule="evenodd" d="M635,285.2 L643,275 L647,275 L647,285.2 L648,285.2 L648,289.7 L647,289.7 L647,295 L643,295 L643,289.7 L635,289.7 Z M638.6,285.2 L643,279.6 L643,285.2 Z"/><path fill="#f00" fill-rule="evenodd" d="M535,649 L547,649 L547,653 L539.3,653 L539.3,656.3 L544,656.3 Q547,656.3 547,659.5 L547,666 Q547,669 544,669 L537,669 Q534,669 534,666.5 L534,663.9 L537.8,663.9 L537.8,664.8 L543,664.8 L543,660.3 L535,660.3 Z"/></svg>
</body></html>
